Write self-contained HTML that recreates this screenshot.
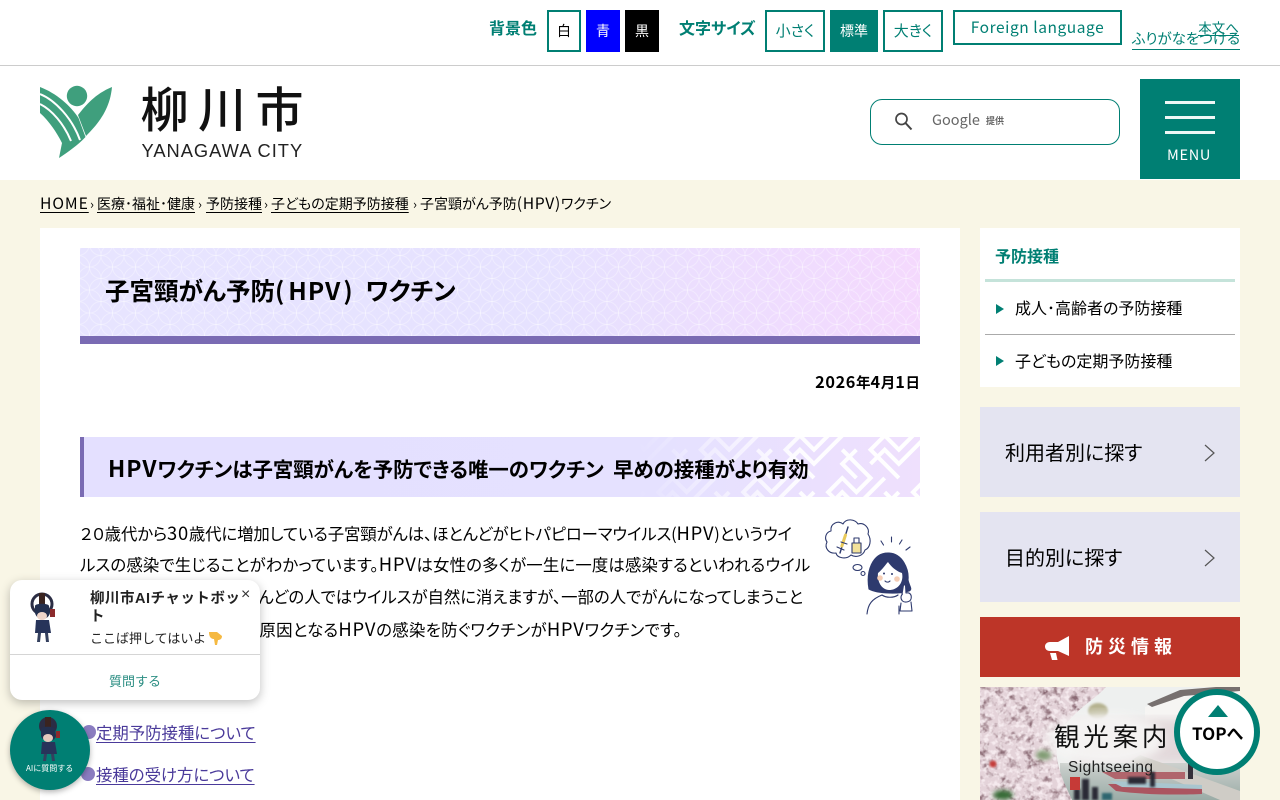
<!DOCTYPE html>
<html lang="ja"><head><meta charset="utf-8"><title>子宮頸がん予防(HPV)ワクチン</title>
<style>
html,body{margin:0;padding:0;width:1280px;height:800px;overflow:hidden;background:#f9f6e6}
body{position:relative;font-family:"Liberation Sans","Noto Sans CJK JP",sans-serif;color:#000}
.t{position:absolute;white-space:nowrap;font-family:"Noto Sans CJK JP",sans-serif;font-feature-settings:"palt";line-height:1}
.b{position:absolute;box-sizing:border-box}
.btn{position:absolute;box-sizing:border-box;border:2px solid #007f73;height:42px;top:10px;color:#007f73;background:#fff;font-family:"Noto Sans CJK JP",sans-serif;font-size:14px;line-height:38px;text-align:center;font-feature-settings:"palt"}
.l{font-size:1.12em;letter-spacing:.04em;line-height:0}
.p{font-size:16.4px;left:80px}
.bc{top:197px;font-size:14px;text-decoration:underline;text-underline-offset:3px;text-decoration-thickness:1px}
.sp{top:197px;font-size:13px}
svg{position:absolute;display:block}
</style></head><body>

<div class="b" style="left:0;top:0;width:1280px;height:180px;background:#fff"></div>
<div class="b" style="left:0;top:65px;width:1280px;height:1px;background:#ccc"></div>

<!-- top bar -->
<div class="t" style="left:489px;top:19px;font-size:16px;font-weight:700;color:#007f73">背景色</div>
<div class="btn" style="left:547px;width:34px;color:#000">白</div>
<div class="btn" style="left:586px;width:34px;background:#0000ff;border-color:#0000ff;color:#fff">青</div>
<div class="btn" style="left:625px;width:34px;background:#000;border-color:#000;color:#fff">黒</div>
<div class="t" style="left:679px;top:19px;font-size:16px;font-weight:700;color:#007f73">文字サイズ</div>
<div class="btn" style="left:765px;width:60px;font-size:15px">小さく</div>
<div class="btn" style="left:830px;width:48px;background:#007f73;color:#fff">標準</div>
<div class="btn" style="left:883px;width:60px;font-size:15px">大きく</div>
<div class="btn" style="left:953px;width:169px;height:35px;line-height:31px;font-size:15.5px;letter-spacing:.55px;border-width:2.5px">Foreign language</div>
<div class="t" style="right:41px;top:21px;font-size:13.5px;color:#007f73;border-bottom:1px solid #007f73;padding-bottom:0">本文へ</div>
<div class="t" style="right:40px;top:32px;font-size:14.5px;color:#007f73;border-bottom:1px solid #007f73;padding-bottom:2px">ふりがなをつける</div>

<!-- logo -->
<svg style="left:40px;top:85px" width="74" height="75" viewBox="40 85 74 75">
<circle cx="77" cy="96" r="10.2" fill="#3f9f7d"/>
<path d="M40 87C56 93 71 106 78.5 118L85.5 137C78 145 68 152 59 158L62 143C56 131 48 120 40 113Z" fill="#3f9f7d"/>
<path d="M40 94C55 100 72 118 80 140" fill="none" stroke="#fff" stroke-width="2"/>
<path d="M40 104C52 110 64 124 71 141" fill="none" stroke="#fff" stroke-width="2"/>
<path d="M112 87C95 94 86 105 78 115L86 136C100 122 110 108 112 87Z" fill="#3f9f7d"/>
</svg>
<div class="t" style="left:140.5px;top:82px;font-size:48px;letter-spacing:9.5px;color:#111;font-weight:500">柳川市</div>
<div class="t" style="left:141.5px;top:142px;font-size:18.3px;font-family:'Liberation Sans',sans-serif;color:#222;letter-spacing:1px">YANAGAWA CITY</div>

<!-- search -->
<div class="b" style="left:870px;top:99px;width:250px;height:46px;border:1px solid #007f73;border-radius:12px;background:#fff"></div>
<svg style="left:892px;top:109px" width="24" height="24" viewBox="0 0 24 24"><circle cx="9.5" cy="10" r="5.5" fill="none" stroke="#444" stroke-width="1.7"/><path d="M13.5 14l6 6.5" stroke="#444" stroke-width="2" fill="none"/></svg>
<div class="t" style="left:932px;top:113px;font-size:14.5px;color:#666;font-family:'Noto Sans CJK JP',sans-serif;font-feature-settings:normal">Google</div>
<div class="t" style="left:986px;top:116px;font-size:9px;color:#666;font-weight:700">提供</div>

<!-- menu -->
<div class="b" style="left:1140px;top:79px;width:100px;height:100px;background:#007f73"></div>
<div class="b" style="left:1165px;top:101px;width:50px;height:3px;background:#eef7f5"></div>
<div class="b" style="left:1165px;top:116px;width:50px;height:3px;background:#eef7f5"></div>
<div class="b" style="left:1165px;top:131px;width:50px;height:3px;background:#eef7f5"></div>
<div class="t" style="left:1167px;top:148px;font-size:14.5px;color:#fff;letter-spacing:.7px">MENU</div>

<!-- breadcrumb -->
<div class="t bc" style="left:40px"><span class="l" style="letter-spacing:.06em">HOME</span></div>
<div class="t sp" style="left:90px">›</div>
<div class="t bc" style="left:97px">医療･福祉･健康</div>
<div class="t sp" style="left:198px">›</div>
<div class="t bc" style="left:206px">予防接種</div>
<div class="t sp" style="left:264px">›</div>
<div class="t bc" style="left:271px">子どもの定期予防接種</div>
<div class="t sp" style="left:413px">›</div>
<div class="t" style="left:420px;top:197px;font-size:14px">子宮頸がん予防<span class="l">(HPV)</span>ワクチン</div>

<!-- main -->
<div class="b" style="left:40px;top:228px;width:920px;height:572px;background:#fff"></div>

<svg style="left:80px;top:248px" width="840" height="96" viewBox="0 0 840 96">
<defs>
<linearGradient id="g1" x1="0" x2="1" y1="0" y2="0"><stop offset="0" stop-color="#e7e4ff"/><stop offset=".55" stop-color="#e6e2ff"/><stop offset="1" stop-color="#f4d9fd"/></linearGradient>
<pattern id="sh" width="23" height="23" patternUnits="userSpaceOnUse" x="-2" y="-4"><g fill="none" stroke="#fff" stroke-opacity=".32" stroke-width="1"><circle cx="0" cy="0" r="11.5"/><circle cx="23" cy="0" r="11.5"/><circle cx="0" cy="23" r="11.5"/><circle cx="23" cy="23" r="11.5"/><circle cx="11.5" cy="11.5" r="11.5"/></g></pattern>
</defs>
<rect width="840" height="88" fill="url(#g1)"/><rect width="840" height="88" fill="url(#sh)"/>
<rect y="88" width="840" height="8" fill="#7a6bb3"/></svg>
<div class="t" style="left:105px;top:279px;font-size:24.5px;font-weight:700;color:#000">子宮頸がん予防(<span style="margin-left:4px;letter-spacing:1px">HPV</span><span style="margin-left:2px;margin-right:13px">)</span>ワクチン</div>

<div class="t" style="right:360px;top:376px;font-size:14.5px;font-weight:700"><span class="l">2026</span>年<span class="l">4</span>月<span class="l">1</span>日</div>

<svg style="left:80px;top:437px" width="840" height="60" viewBox="0 0 840 60">
<defs>
<linearGradient id="g2" x1="0" x2="1"><stop offset="0" stop-color="#e4e0ff"/><stop offset=".7" stop-color="#e5e1ff"/><stop offset="1" stop-color="#efe0fd"/></linearGradient>
<linearGradient id="fd" x1="0" x2="1"><stop offset=".66" stop-color="#fff" stop-opacity="0"/><stop offset=".86" stop-color="#fff" stop-opacity=".9"/><stop offset="1" stop-color="#fff"/></linearGradient>
<mask id="mk"><rect width="840" height="60" fill="url(#fd)"/></mask>
<pattern id="sa" width="60" height="60" patternUnits="userSpaceOnUse" patternTransform="rotate(45) translate(8 0)"><g fill="none" stroke="#fff" stroke-width="4"><path d="M0 10H40V30H20V50H60M10 0V20H30M50 0V40H30V60"/></g></pattern>
</defs>
<rect width="840" height="60" fill="url(#g2)"/>
<rect width="840" height="60" fill="url(#sa)" mask="url(#mk)"/>
<rect width="4" height="60" fill="#7a6bb3"/></svg>
<div class="t" style="left:108px;top:458px;font-size:20.4px;font-weight:700"><span class="l">HPV</span>ワクチンは子宮頸がんを予防できる唯一のワクチン&nbsp;&nbsp;早めの接種がより有効</div>

<div class="t p" style="top:525px;letter-spacing:-.12px">２０歳代から<span class="l">30</span>歳代に増加している子宮頸がんは、ほとんどがヒトパピローマウイルス(<span class="l">HPV</span>)というウイ</div>
<div class="t p" style="top:556px;letter-spacing:.16px">ルスの感染で生じることがわかっています。<span class="l">HPV</span>は女性の多くが一生に一度は感染するといわれるウイル</div>
<div class="t p" style="top:588px;left:auto;right:477px">スで、感染してもほとんどの人ではウイルスが自然に消えますが、一部の人でがんになってしまうこと</div>
<div class="t p" style="top:621px;left:auto;right:598px;letter-spacing:.3px">があります。子宮頸がんの原因となる<span class="l">HPV</span>の感染を防ぐワクチンが<span class="l">HPV</span>ワクチンです。</div>

<!-- girl -->
<svg style="left:810px;top:510px" width="120" height="115" viewBox="0 0 120 115" fill="none" stroke="#2e3a6e" stroke-width="1.1" stroke-linecap="round" stroke-linejoin="round">
<path d="M21 21C20 13 29 10 33 14C36 8 45 9 48 14C54 12 60 18 58 24C62 30 60 38 55 40C53 46 46 48 41 45C36 50 27 48 26 43C19 44 14 38 17 32C14 28 16 22 21 21Z"/>
<path d="M38 17L30 43" stroke-width="1.4"/><path d="M35.5 25l-3.6 11" stroke="#e8c95a" stroke-width="3"/>
<path d="M27 37l7 3M31 32l6 2"/>
<rect x="42" y="33" width="9" height="10" fill="#f3e29a"/><rect x="44" y="28" width="5" height="5"/>
<ellipse cx="47.500" cy="57.500" rx="4.500" ry="3"/><circle cx="53" cy="63.500" r="2"/>
<path d="M71 31l2.500 4M81.500 27v5M92 30l-2.500 4M100 37l-4 3"/>
<path d="M59 79C56 62 62 43 78 43C93 43 99 60 98 70C99 76 103 79 99 81C90 84 68 84 59 79Z" fill="#2e3a6e"/>
<path d="M68 63C72 60 76 54 78 52C82 58 88 62 92 63C94 72 88 80 79 80C72 80 67 72 68 63Z" fill="#fff" stroke="none"/>
<circle cx="70" cy="68" r="2.800" fill="#f5cdb5" stroke="none"/><circle cx="87" cy="69" r="2.800" fill="#f5cdb5" stroke="none"/>
<circle cx="74" cy="63.500" r="1" fill="#2e3a6e" stroke="none"/><circle cx="82" cy="64" r="1" fill="#2e3a6e" stroke="none"/><path d="M75 71c1.500 1.500 3.500 1.500 5 0"/>
<path d="M57 104C58 94 62 89 72 85C76 88 84 88 88 85"/><path d="M89 104V96"/>
<path d="M92 84l1.500-9 2 0 .5 8c4-1 6 2 5 6-1 3-6 4-8.500 2-2-2-2-5 0-7Z" fill="#fff"/><path d="M91 93l-1 8M101 92l1 9M90 101h12"/>
</svg>

<!-- links -->
<div class="b" style="left:82px;top:725px;width:14px;height:14px;border-radius:50%;background:#8a7cc0"></div>
<div class="t" style="left:96px;top:724px;font-size:16.4px;color:#4a3a9a;text-decoration:underline;text-underline-offset:3px;text-decoration-thickness:1px">定期予防接種について</div>
<div class="b" style="left:81px;top:767px;width:14px;height:14px;border-radius:50%;background:#8a7cc0"></div>
<div class="t" style="left:96px;top:766px;font-size:16.4px;color:#4a3a9a;text-decoration:underline;text-underline-offset:3px;text-decoration-thickness:1px">接種の受け方について</div>

<!-- side nav -->
<div class="b" style="left:980px;top:228px;width:260px;height:159px;background:#fff"></div>
<div class="t" style="left:995px;top:247px;font-size:16px;font-weight:700;color:#007f73">予防接種</div>
<div class="b" style="left:985px;top:279px;width:250px;height:3px;background:#c5e3da"></div>
<svg style="left:995px;top:303px" width="10" height="12"><path d="M1 1L9 6L1 11Z" fill="#007f73"/></svg>
<div class="t" style="left:1015px;top:299px;font-size:16px">成人･高齢者の予防接種</div>
<div class="b" style="left:985px;top:334px;width:250px;height:1px;background:#aaa"></div>
<svg style="left:995px;top:355px" width="10" height="12"><path d="M1 1L9 6L1 11Z" fill="#007f73"/></svg>
<div class="t" style="left:1015px;top:352px;font-size:16px">子どもの定期予防接種</div>

<div class="b" style="left:980px;top:407px;width:260px;height:90px;background:#e4e4f1"></div>
<div class="t" style="left:1005px;top:442px;font-size:20px">利用者別に探す</div>
<svg style="left:1203px;top:444px" width="14" height="18"><path d="M2 1L11 9L2 17" fill="none" stroke="#555" stroke-width="1.200"/></svg>
<div class="b" style="left:980px;top:512px;width:260px;height:90px;background:#e4e4f1"></div>
<div class="t" style="left:1005px;top:547px;font-size:20px">目的別に探す</div>
<svg style="left:1203px;top:549px" width="14" height="18"><path d="M2 1L11 9L2 17" fill="none" stroke="#555" stroke-width="1.200"/></svg>

<div class="b" style="left:980px;top:617px;width:260px;height:60px;background:#bd3528"></div>
<svg style="left:1044px;top:634px" width="28" height="28" viewBox="0 0 28 28" fill="#fff"><path d="M25 2V22L14 17H6C2 17 1 14 1 12.500C1 10 3 8 6 8H14Z"/><path d="M6 19H12L13.500 26H8Z"/></svg>
<div class="t" style="left:1085px;top:637px;font-size:18px;font-weight:700;color:#fff;letter-spacing:5px">防災情報</div>

<!-- photo banner -->
<svg style="left:980px;top:687px" width="260" height="113" viewBox="0 0 260 113">
<defs>
<filter id="bl"><feGaussianBlur stdDeviation="5"/></filter>
<filter id="bl2"><feGaussianBlur stdDeviation="1"/></filter>
<filter id="bl3" x="-50%" y="-50%" width="200%" height="200%"><feGaussianBlur stdDeviation="2.500"/></filter>
<filter id="nz" x="0" y="0" width="100%" height="100%" color-interpolation-filters="sRGB"><feTurbulence type="fractalNoise" baseFrequency=".11" numOctaves="3" seed="7"/><feColorMatrix values="0 0 0 0 .50  0 0 0 0 .37  0 0 0 0 .41  3.500 0 0 0 -1.750"/></filter>
<filter id="nz2" x="0" y="0" width="100%" height="100%" color-interpolation-filters="sRGB"><feTurbulence type="fractalNoise" baseFrequency=".22" numOctaves="2" seed="3"/><feColorMatrix values="0 0 0 0 1  0 0 0 0 .97  0 0 0 0 .98  0 4 0 0 -1.800"/></filter>
<linearGradient id="wt" x1="0" x2="0" y1="0" y2="1"><stop offset="0" stop-color="#cdd1ce"/><stop offset="1" stop-color="#9aaca6"/></linearGradient>
<clipPath id="tree"><path d="M0 0H126C116 12 92 24 80 46C70 70 84 95 92 113H0Z"/></clipPath>
</defs>
<rect width="260" height="113" fill="#eef0ef"/>
<path d="M165 20L200 6L260 0V40L165 40Z" fill="#f6f5f3"/><path d="M167 17L200 3L260 -2V4L204 9L172 20Z" fill="#77706f"/>
<ellipse cx="118" cy="24" rx="10" ry="8" fill="#b6b391" filter="url(#bl2)"/>
<rect x="95" y="32" width="165" height="44" fill="#e2d8da" filter="url(#bl)"/>
<rect x="80" y="76" width="180" height="37" fill="url(#wt)"/>
<path d="M160 68L260 104V113H240L150 74Z" fill="#cfccc6"/>
<g clip-path="url(#tree)"><rect width="140" height="113" fill="#e4d3d9"/><rect width="140" height="113" filter="url(#nz)" opacity=".9"/><rect width="140" height="113" filter="url(#nz2)" opacity=".65"/>
<ellipse cx="64" cy="68" rx="8" ry="5" fill="#7d9a70" filter="url(#bl3)"/><ellipse cx="23" cy="108" rx="10" ry="5" fill="#356b36" filter="url(#bl3)"/><circle cx="13" cy="77" r="3.500" fill="#c43c3a" filter="url(#bl2)"/></g>
<ellipse cx="125" cy="52" rx="60" ry="26" fill="#f6f5f4" opacity=".92" filter="url(#bl)"/>
<path d="M122 85L135 92H205V85Z" fill="#b0656c"/>
<path d="M128 97L136 104C165 108 200 108 222 107V99L138 97Z" fill="#ab5560"/><path d="M130 94L222 98V102L142 100Z" fill="#a9c6cf"/>
<g fill="#2c2c36" filter="url(#bl2)"><rect x="170" y="85" width="5" height="15"/><rect x="148" y="90" width="18" height="7"/><rect x="102" y="92" width="7" height="21"/><rect x="112" y="100" width="6" height="13"/><rect x="94" y="102" width="6" height="11"/><rect x="122" y="106" width="10" height="7" fill="#2f6670"/></g>
<rect x="90" y="90" width="10" height="13" fill="#c63a37"/>
<rect x="208" y="72" width="5" height="20" fill="#34303a"/>
</svg>
<div class="t" style="left:1054px;top:723px;font-size:25.500px;letter-spacing:3.800px;color:#111">観光案内</div>
<div class="t" style="left:1068px;top:760px;font-size:15.500px;letter-spacing:.4px;color:#222;font-family:'Liberation Sans',sans-serif">Sightseeing</div>

<!-- top button -->
<div class="b" style="left:1174px;top:689px;width:86px;height:86px;border-radius:50%;background:#fff;border:6px solid #007f73"></div>
<svg style="left:1207px;top:704px" width="22" height="14"><path d="M1 13L11 1L21 13Z" fill="#007f73"/></svg>
<div class="t" style="left:1192px;top:724px;font-size:17px;font-weight:700;color:#000">TOPへ</div>

<!-- chatbot popup -->
<div class="b" style="left:10px;top:580px;width:250px;height:120px;background:#fff;border-radius:12px;box-shadow:0 3px 10px rgba(0,0,0,.25)"></div>
<svg style="left:24px;top:590px" width="40" height="54" viewBox="0 0 40 54">
<circle cx="18" cy="14" r="10" fill="#fff" stroke="#2b2d44" stroke-width="3"/>
<path d="M15 3h6v14h-6z" fill="#3a2420"/><path d="M11 16C11 13 25 13 25 16L26 23C24 31 13 31 11 23Z" fill="#24304f"/>
<ellipse cx="18" cy="26" rx="5" ry="4" fill="#f0d6ca"/><rect x="26" y="19" width="5" height="8" fill="#8c2a2c"/>
<path d="M12 30H25L27 43H11Z" fill="#27345a"/><path d="M14 43h3l-1 9h-3zM21 43h3l1 9h-3z" fill="#34405e"/>
</svg>
<div class="t" style="left:90px;top:590px;width:155px;font-size:14.500px;font-weight:700;line-height:18px;white-space:normal;color:#222;font-family:'Liberation Sans','Noto Sans CJK JP',sans-serif;font-feature-settings:normal;word-break:break-all;letter-spacing:.5px">柳川市AIチャットボット</div>
<div class="t" style="left:241px;top:587px;font-size:16px;color:#333;font-family:'Liberation Sans',sans-serif">×</div>
<div class="t" style="left:90px;top:631px;font-size:13px;color:#222;font-feature-settings:normal">ここば押してはいよ</div>
<svg style="left:208px;top:630px" width="16" height="16" viewBox="0 0 16 16"><path d="M1 2H9L14 6C14 9 12 10 10 10L9 15H7L6 9C3 9 1 7 1 2Z" fill="#f5b942"/></svg>
<div class="b" style="left:10px;top:654px;width:250px;height:1px;background:#d5d5d5"></div>
<div class="t" style="left:109px;top:674px;font-size:13px;color:#2a8d82;font-feature-settings:normal">質問する</div>

<!-- chatbot button -->
<div class="b" style="left:10px;top:710px;width:80px;height:80px;border-radius:50%;background:#007f73;box-shadow:0 2px 6px rgba(0,0,0,.3)"></div>
<svg style="left:30px;top:715px" width="40" height="48" viewBox="0 0 40 48">
<circle cx="18" cy="11" r="9" fill="#2b2d44"/><path d="M15 2h6v12h-6z" fill="#3a2420"/>
<path d="M11 14C11 11 25 11 25 14L26 21C24 28 13 28 11 21Z" fill="#24304f"/><ellipse cx="18" cy="23" rx="5" ry="4" fill="#e5c9bd"/><rect x="26" y="16" width="4" height="7" fill="#8c2a2c"/>
<path d="M12 27H25L27 39H11Z" fill="#27345a"/><path d="M14 39h3l-1 7h-3zM21 39h3l1 7h-3z" fill="#34405e"/>
</svg>
<div class="t" style="left:26px;top:765px;font-size:8px;color:#fff;font-feature-settings:normal">AIに質問する</div>

</body></html>
